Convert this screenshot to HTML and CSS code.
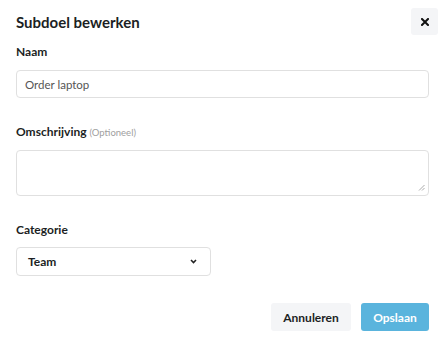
FILE: index.html
```html
<!DOCTYPE html>
<html lang="nl">
<head>
<meta charset="utf-8">
<link rel="stylesheet" href="styles.css">
</head>
<body>
<div class="modal">
  <div class="header">
    <h1 class="title">Subdoel bewerken</h1>
    <button class="close" aria-label="Sluiten">
      <svg width="8" height="8" viewBox="0 0 8 8"><path d="M1 1L7 7M7 1L1 7" stroke="#111" stroke-width="2" stroke-linecap="square"/></svg>
    </button>
  </div>
  <div class="field field-name">
    <label class="label">Naam</label>
    <div class="input">Order laptop</div>
  </div>
  <div class="field field-desc">
    <label class="label">Omschrijving <span class="optional">(Optioneel)</span></label>
    <div class="textarea">
      <svg class="grip" width="7" height="7" viewBox="0 0 7 7"><path d="M1 6.5L6.5 1M4 6.5L6.5 4" stroke="#aaa" stroke-width="1"/></svg>
    </div>
  </div>
  <div class="field field-cat">
    <label class="label">Categorie</label>
    <div class="select">
      <span>Team</span>
      <svg width="7" height="5" viewBox="0 0 7 5"><path d="M1 1L3.5 3.5L6 1" stroke="#222" stroke-width="1.6" fill="none"/></svg>
    </div>
  </div>
  <div class="actions">
    <button class="btn btn-cancel">Annuleren</button>
    <button class="btn btn-save">Opslaan</button>
  </div>
</div>
</body>
</html>
```
FILE: styles.css
```css
* { box-sizing: border-box; }
html, body { margin: 0; background: #fff; }
body { font-family: Lato, "Open Sans", sans-serif; color: #1c1f24; }
.modal { width: 445px; height: 340px; padding: 8px 16px 0 16px; display: flex; flex-direction: column; }
.header { display: flex; justify-content: space-between; align-items: center; margin-right: -9px; height: 27px; }
.title { margin: 0; font-size: 15px; font-weight: 700; color: #1c1f24; line-height: 20px; }
.close { width: 27px; height: 27px; border: 0; border-radius: 3px; background: #f4f5f7; display: flex; align-items: center; justify-content: center; padding: 0; }
.field { display: flex; flex-direction: column; }
.label { font-size: 12px; font-weight: 700; color: #1c1f24; line-height: 16px; margin-bottom: 10px; }
.field-name { margin-top: 9px; }
.optional { font-size: 9.5px; font-weight: 400; color: #a0a0a0; }
.input { height: 28px; border: 1px solid #e0e0e0; border-radius: 4px; padding: 0 8px; font-size: 11.5px; color: #555; display: flex; align-items: center; }
.field-desc { margin-top: 26px; }
.field-desc .label, .field-cat .label { margin-bottom: 9px; }
.textarea { height: 46px; border: 1px solid #e0e0e0; border-radius: 4px; position: relative; }
.grip { position: absolute; right: 3px; bottom: 4px; }
.field-cat { margin-top: 26px; }
.select { width: 195px; height: 29px; border: 1px solid #e0e0e0; border-radius: 4px; padding: 0 13px 0 11px; display: flex; align-items: center; justify-content: space-between; font-size: 12px; font-weight: 700; color: #1c1f24; }
.actions { display: flex; justify-content: flex-end; gap: 10px; margin-top: 27px; }
.btn { height: 28px; border: 0; border-radius: 3px; font-family: inherit; font-size: 12px; font-weight: 700; padding: 0; }
.btn-cancel { width: 80px; background: #f4f5f7; color: #1c1f24; }
.btn-save { width: 68px; background: #5ab4dd; color: #fff; }
```
